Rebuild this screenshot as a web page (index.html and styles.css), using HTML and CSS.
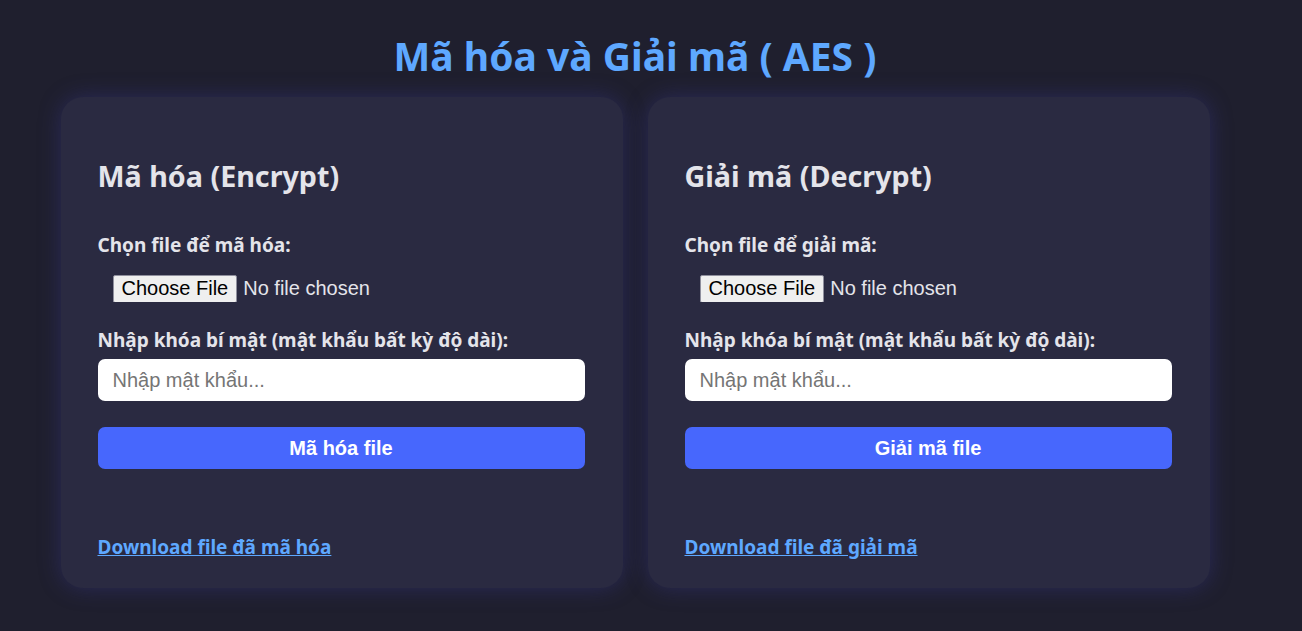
FILE: index.html
```html
<!DOCTYPE html>
<html lang="vi">
<head>
<meta charset="utf-8">
<title>Mã hóa và Giải mã ( AES )</title>
<link rel="stylesheet" href="styles.css">
</head>
<body>
<main class="page">
  <h1 class="title">Mã hóa và Giải mã ( AES )</h1>
  <div class="cards">
    <section class="card">
      <h2 class="card-title">Mã hóa (Encrypt)</h2>
      <label class="label">Chọn file để mã hóa:</label>
      <input class="file" type="file">
      <label class="label label-key">Nhập khóa bí mật (mật khẩu bất kỳ độ dài):</label>
      <input class="text" type="password" placeholder="Nhập mật khẩu...">
      <button class="btn">Mã hóa file</button>
      <a class="link" href="#">Download file đã mã hóa</a>
    </section>
    <section class="card">
      <h2 class="card-title">Giải mã (Decrypt)</h2>
      <label class="label">Chọn file để giải mã:</label>
      <input class="file" type="file">
      <label class="label label-key">Nhập khóa bí mật (mật khẩu bất kỳ độ dài):</label>
      <input class="text" type="password" placeholder="Nhập mật khẩu...">
      <button class="btn">Giải mã file</button>
      <a class="link" href="#">Download file đã giải mã</a>
    </section>
  </div>
</main>
</body>
</html>
```
FILE: styles.css
```css
* { box-sizing: border-box; }
html, body { margin: 0; padding: 0; }
body {
  background: #1f1f2e;
  font-family: "Noto Sans", "Open Sans", sans-serif;
  color: #e2e2e8;
  height: 631px;
  overflow: hidden;
}
.page {
  width: 1270px;
  display: flex;
  flex-direction: column;
  align-items: center;
  padding-top: 32px;
}
.title {
  margin: 0;
  font-size: 39px;
  line-height: 48px;
  font-weight: 700;
  color: #5ea8ff;
}
.cards {
  display: flex;
  gap: 25px;
  margin-top: 17px;
}
.card {
  width: 562px;
  background: #2a2a41;
  border-radius: 22px;
  box-shadow: 0 0 22px rgba(56, 56, 140, 0.45);
  padding: 61px 38px 27px 37px;
  display: flex;
  flex-direction: column;
  align-items: flex-start;
}
.card-title {
  margin: 0;
  font-size: 28.7px;
  line-height: 36px;
  font-weight: 700;
  color: #e4e4ea;
}
.label {
  margin-top: 39px;
  font-size: 19px;
  line-height: 24px;
  font-weight: 700;
  color: #e4e4ea;
}
.label-key { margin-top: 26px; }
.file {
  margin: 17px 0 0 15px;
  font-family: "Liberation Sans", Arial, sans-serif;
  font-size: 20px;
  color: #e4e4ea;
  height: 28px;
  line-height: 28px;
}
.file::file-selector-button {
  font-family: "Liberation Sans", Arial, sans-serif;
  font-size: 20px;
  height: 28px;
  padding: 0 8px;
  margin-right: 6px;
  background: #efefef;
  color: #000;
  border: 1px solid #8f8f9d;
  border-radius: 2px;
}
.text {
  margin-top: 7px;
  width: 100%;
  height: 42px;
  border: none;
  border-radius: 7px;
  background: #fff;
  padding: 0 15px;
  font-family: "Liberation Sans", Arial, sans-serif;
  font-size: 20px;
  color: #333;
}
.text::placeholder { color: #757575; }
.btn {
  margin-top: 26px;
  width: 100%;
  height: 42px;
  border: none;
  border-radius: 7px;
  background: #4767fd;
  color: #fff;
  font-family: "Liberation Sans", Arial, sans-serif;
  font-size: 20px;
  font-weight: 700;
}
.link {
  margin-top: 64px;
  font-size: 19px;
  line-height: 28px;
  font-weight: 700;
  color: #5ea8ff;
  text-decoration: underline;
}
```
